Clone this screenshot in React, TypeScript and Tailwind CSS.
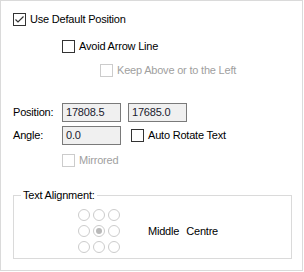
import type { ReactNode } from "react";

function Check({ checked = false, disabled = false, label }: { checked?: boolean; disabled?: boolean; label: ReactNode }) {
  return (
    <div className="flex h-[13px] items-center">
      <span
        className={`flex h-[13px] w-[13px] shrink-0 items-center justify-center border bg-white ${
          disabled ? "border-[#cccccc]" : "border-[#333333]"
        }`}
      >
        {checked && (
          <svg width="11" height="11" viewBox="0 0 11 11">
            <polyline points="1.5,5.5 4,8 9.5,2.5" fill="none" stroke="#333333" strokeWidth="1.2" />
          </svg>
        )}
      </span>
      <span className={`ml-[4px] whitespace-nowrap ${disabled ? "text-[#a0a0a0]" : "text-black"}`}>{label}</span>
    </div>
  );
}

function Field({ value }: { value: string }) {
  return (
    <div className="flex h-[19px] w-[59px] items-center border border-[#7a7a7a] bg-[#f0f0f0] pl-[3px] text-[#1a1a2e]">
      {value}
    </div>
  );
}

function Radio({ selected = false }: { selected?: boolean }) {
  return (
    <span className="flex h-[12px] w-[12px] items-center justify-center rounded-full border border-[#cccccc] bg-white">
      {selected && <span className="h-[6px] w-[6px] rounded-full bg-[#b9b9b9]" />}
    </span>
  );
}

export default function App() {
  const cells = [0, 1, 2, 3, 4, 5, 6, 7, 8];

  return (
    <div className="h-[271px] w-[303px] border border-[#dadada] bg-white font-['Liberation_Sans',Arial,sans-serif] text-[11px] leading-[13px] tracking-[-0.2px] text-black">
      <div className="flex flex-col pl-[12px] pt-[12px]">
        <Check checked label="Use Default Position" />
        <div className="mt-[14px] pl-[49px]">
          <Check label="Avoid Arrow Line" />
        </div>
        <div className="mt-[11px] pl-[87px]">
          <Check disabled label="Keep Above or to the Left" />
        </div>

        <div className="mt-[26px] flex items-center">
          <span className="w-[49px]">Position:</span>
          <Field value="17808.5" />
          <div className="ml-[7px]">
            <Field value="17685.0" />
          </div>
        </div>
        <div className="mt-[4px] flex items-center">
          <span className="w-[49px]">Angle:</span>
          <Field value="0.0" />
          <div className="ml-[10px]">
            <Check label="Auto Rotate Text" />
          </div>
        </div>
        <div className="mt-[9px] pl-[49px]">
          <Check disabled label="Mirrored" />
        </div>

        <div className="relative mt-[28px] h-[64px] w-[279px] border border-[#dadada]">
          <span className="absolute -top-[7px] left-[7px] bg-white px-[2px]">Text Alignment:</span>
          <div className="flex items-center pl-[64px] pt-[13px]">
            <div className="grid grid-cols-3 gap-x-[3px] gap-y-[4px]">
              {cells.map((i) => (
                <Radio key={i} selected={i === 4} />
              ))}
            </div>
            <div className="ml-[28px] flex gap-[7px]">
              <span>Middle</span>
              <span>Centre</span>
            </div>
          </div>
        </div>
      </div>
    </div>
  );
}
